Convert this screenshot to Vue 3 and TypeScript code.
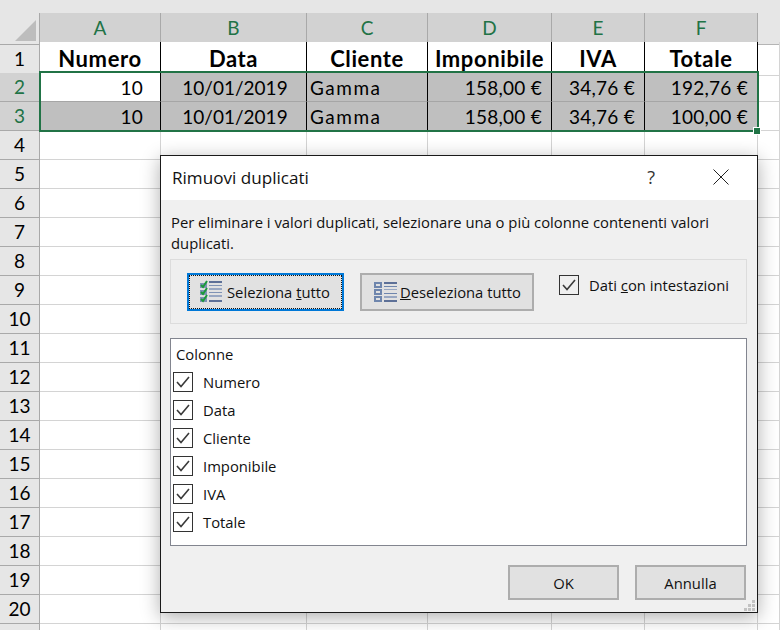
<script setup lang="ts">
const cols = ['A', 'B', 'C', 'D', 'E', 'F']
const head = ['Numero', 'Data', 'Cliente', 'Imponibile', 'IVA', 'Totale']
const dataRows = [
  ['10', '10/01/2019', 'Gamma', '158,00 €', '34,76 €', '192,76 €'],
  ['10', '10/01/2019', 'Gamma', '158,00 €', '34,76 €', '100,00 €'],
]
const aligns = ['right first', 'center', 'left', 'right', 'right', 'right']
const emptyRows = Array.from({ length: 17 }, (_, i) => i + 4)
const items = ['Numero', 'Data', 'Cliente', 'Imponibile', 'IVA', 'Totale']
const gripDots = [[8, 0], [4, 4], [8, 4], [0, 8], [4, 8], [8, 8]]
</script>

<template>
  <div class="sheet">
    <div class="band"></div>
    <div class="row head-row">
      <div class="corner"><span class="tri"></span></div>
      <div v-for="c in cols" :key="c" class="col-h">{{ c }}</div>
      <div class="filler-h"></div>
    </div>
    <div class="row first-row">
      <div class="row-h">1</div>
      <div v-for="h in head" :key="h" class="cell bold">{{ h }}</div>
      <div class="blank"></div>
    </div>
    <div v-for="(r, ri) in dataRows" :key="ri" class="row">
      <div class="row-h sel">{{ ri + 2 }}</div>
      <div
        v-for="(v, ci) in r"
        :key="ci"
        class="cell filled"
        :class="[aligns[ci], { white: ri === 0 && ci === 0 }]"
      >{{ v }}</div>
      <div class="blank"></div>
    </div>
    <div v-for="n in emptyRows" :key="n" class="row">
      <div class="row-h">{{ n }}</div>
      <div v-for="c in cols" :key="c" class="blank"></div>
      <div class="blank"></div>
    </div>
    <div class="row">
      <div class="row-h"></div>
      <div v-for="c in cols" :key="c" class="blank"></div>
      <div class="blank"></div>
    </div>

    <div class="selection"><span class="handle"></span></div>

    <div class="dialog">
      <div class="title">
        <span class="title-text">Rimuovi duplicati</span>
        <span class="help">?</span>
        <svg class="close" width="16" height="16" viewBox="0 0 16 16">
          <path d="M.5.5l15 15M15.5.5l-15 15" stroke="#222" stroke-width="1" fill="none" />
        </svg>
      </div>
      <div class="body">
        <p class="desc">Per eliminare i valori duplicati, selezionare una o più colonne contenenti valori duplicati.</p>
        <div class="panel">
          <button class="btn focus">
            <span class="focus-ring">
              <svg width="24" height="24" viewBox="0 0 24 24">
                <g fill="#7f93b5">
                  <rect x="1" y="3" width="7" height="5" />
                  <rect x="1" y="10" width="7" height="5" />
                  <rect x="1" y="17" width="7" height="5" />
                  <rect x="10" y="1" width="13" height="2" fill="#5d7097" />
                  <rect x="10" y="5" width="13" height="1" />
                  <rect x="10" y="8" width="13" height="2" fill="#98a7c2" />
                  <rect x="10" y="12" width="13" height="1" />
                  <rect x="10" y="15" width="13" height="2" fill="#98a7c2" />
                  <rect x="10" y="20" width="13" height="2" fill="#5d7097" />
                </g>
                <g fill="none" stroke="#1b9a3a" stroke-width="2">
                  <path d="M2 5l2 2 4-6" />
                  <path d="M2 12l2 2 4-6" />
                  <path d="M2 19l2 2 4-6" />
                </g>
              </svg>
              <span>Seleziona <u>t</u>utto</span>
            </span>
          </button>
          <button class="btn second">
            <svg width="24" height="24" viewBox="0 0 24 24">
              <g fill="#6f86ad">
                <path fill-rule="evenodd" d="M1 2h8v6H1zM3 4v2h4V4z" />
                <path fill-rule="evenodd" d="M1 9h8v6H1zM3 11v2h4v-2z" />
                <path fill-rule="evenodd" d="M1 16h8v6H1zM3 18v2h4v-2z" />
                <rect x="11" y="2" width="13" height="2" fill="#5d7097" />
                <rect x="11" y="6" width="13" height="1" />
                <rect x="11" y="9" width="13" height="1" fill="#98a7c2" />
                <rect x="11" y="13" width="13" height="1" />
                <rect x="11" y="16" width="13" height="2" fill="#98a7c2" />
                <rect x="11" y="20" width="13" height="2" fill="#5d7097" />
              </g>
            </svg>
            <span><u>D</u>eseleziona tutto</span>
          </button>
          <label class="hdr-check">
            <span class="box">
              <svg width="14" height="12" viewBox="0 0 14 12"><path d="M1 6l4 4.500L13 1" fill="none" stroke="#3a3a3a" stroke-width="1.600" /></svg>
            </span>
            <span>Dati <u>c</u>on intestazioni</span>
          </label>
        </div>
        <div class="list">
          <div class="list-head">Colonne</div>
          <div v-for="it in items" :key="it" class="list-item">
            <span class="box">
              <svg width="14" height="12" viewBox="0 0 14 12"><path d="M1 6l4 4.500L13 1" fill="none" stroke="#3a3a3a" stroke-width="1.600" /></svg>
            </span>
            <span>{{ it }}</span>
          </div>
        </div>
        <div class="actions">
          <button class="btn plain">OK</button>
          <button class="btn plain">Annulla</button>
        </div>
      </div>
      <svg class="grip" width="11" height="11" viewBox="0 0 11 11">
        <rect v-for="(d, i) in gripDots" :key="i" :x="d[0]" :y="d[1]" width="3" height="3" fill="#c2c2c2" />
      </svg>
    </div>
  </div>
</template>

<style>
html, body { margin: 0; background: #fff; overflow: hidden; }
</style>

<style scoped>
.sheet {
  position: relative;
  width: 780px;
  height: 630px;
  overflow: hidden;
  background: #fff;
  font-family: "Lato", "Liberation Sans", sans-serif;
  color: #000;
}
.band { height: 13px; background: #e6e6e6; }
.row {
  display: grid;
  grid-template-columns: 40px 121px 146px 121px 124px 93px 113px 22px;
  height: 29px;
}
.head-row { height: 29px; }
.first-row { height: 31px; }
.corner {
  position: relative;
  background: #e6e6e6;
  border-right: 1px solid #a9a9a9;
  border-bottom: 1px solid #a9a9a9;
  box-sizing: border-box;
}
.tri {
  position: absolute;
  right: 3px;
  bottom: 3px;
  width: 0;
  height: 0;
  border-left: 21px solid transparent;
  border-bottom: 21px solid #bdbdbd;
}
.col-h {
  box-sizing: border-box;
  background: #d2d2d2;
  border-right: 1px solid #a9a9a9;
  border-bottom: 2px solid #217346;
  color: #217346;
  text-align: center;
  font-size: 19px;
  line-height: 30px;
}
.filler-h {
  background: #e6e6e6;
  border-bottom: 1px solid #b5b5b5;
  box-sizing: border-box;
}
.row-h {
  box-sizing: border-box;
  background: #e6e6e6;
  border-right: 1px solid #a9a9a9;
  border-bottom: 1px solid #a9a9a9;
  text-align: center;
  font-size: 19px;
  line-height: 28px;
}
.row-h.sel { background: #d2d2d2; color: #217346; }
.first-row .row-h { line-height: 33px; }
.blank {
  box-sizing: border-box;
  border-right: 1px solid #d4d4d4;
  border-bottom: 1px solid #d4d4d4;
}
.cell {
  box-sizing: border-box;
  border-right: 1px solid #000;
  font-size: 19px;
  white-space: nowrap;
  overflow: hidden;
}
.cell.bold {
  font-weight: 700;
  text-align: center;
  line-height: 33px;
  background: #fff;
  font-size: 22px;
  letter-spacing: 0.6px;
}
.cell.filled {
  background: #bfbfbf;
  border-bottom: 1px solid #a6a6a6;
  line-height: 29px;
  padding: 0 9px 0 3px;
}
.cell.white { background: #fff; }
.cell.filled.right { text-align: right; letter-spacing: 0.25px; }
.cell.filled.first { padding-right: 17px; }
.cell.filled.center { text-align: center; padding: 0 3px 0 6px; }
.cell.filled.left { text-align: left; letter-spacing: 1.5px; }
.selection {
  position: absolute;
  left: 39px;
  top: 71px;
  width: 720px;
  height: 61px;
  box-sizing: border-box;
  border: 2px solid #217346;
}
.handle {
  position: absolute;
  right: -3px;
  bottom: -4px;
  width: 6px;
  height: 6px;
  background: #217346;
  outline: 1px solid #fff;
}
.dialog {
  position: absolute;
  left: 160px;
  top: 155px;
  width: 598px;
  height: 458px;
  box-sizing: border-box;
  border: 1px solid #1a1a1a;
  background: #f0f0f0;
  box-shadow: 0 4px 18px rgba(0, 0, 0, 0.32);
  font-family: "Open Sans", "Noto Sans", sans-serif;
  font-size: 14.8px;
  color: #111;
  display: flex;
  flex-direction: column;
}
.title {
  height: 44px;
  background: #fff;
  display: flex;
  align-items: center;
  padding-left: 11px;
  flex: none;
}
.title-text { font-size: 17.1px; flex: 1; margin-top: -1px; }
.help { font-size: 18px; color: #333; margin-right: 58px; margin-top: -3px; }
.close { margin-right: 28px; margin-top: -2px; }
.body {
  flex: 1;
  display: flex;
  flex-direction: column;
  padding: 0 10px 0 9px;
  min-height: 0;
}
.desc {
  margin: 12px 10px 0 1px;
  line-height: 21px;
  height: 47px;
}
.panel {
  box-sizing: border-box;
  height: 65px;
  background: #efefef;
  border: 1px solid #dcdcdc;
  display: flex;
  align-items: flex-start;
  padding: 13px 0 0 16px;
  flex: none;
}
.btn {
  box-sizing: border-box;
  background: #e1e1e1;
  border: 2px solid #adadad;
  font: inherit;
  color: #111;
  padding: 0;
  display: flex;
  align-items: center;
  justify-content: center;
}
.focus {
  width: 157px;
  height: 38px;
  border-color: #0078d7;
}
.focus-ring {
  box-sizing: border-box;
  width: 100%;
  height: 100%;
  border: 1px dotted #111;
  display: flex;
  align-items: center;
  padding-left: 9px;
  gap: 4px;
}
.second {
  width: 174px;
  height: 38px;
  margin-left: 16px;
  justify-content: flex-start;
  padding-left: 11px;
  gap: 3px;
  white-space: nowrap;
}
.hdr-check {
  display: flex;
  align-items: center;
  gap: 10px;
  margin: 2px 0 0 25px;
  height: 20px;
  white-space: nowrap;
}
.box {
  box-sizing: border-box;
  width: 20px;
  height: 20px;
  border: 1px solid #333;
  background: #fff;
  display: inline-flex;
  align-items: center;
  justify-content: center;
  flex: none;
}
.hdr-check .box { background: transparent; }
.list {
  box-sizing: border-box;
  margin-top: 14px;
  height: 208px;
  background: #fff;
  border: 1px solid #82858f;
  flex: none;
}
.list-head { height: 29px; padding-left: 5px; line-height: 30px; }
.list-item {
  height: 28px;
  padding-left: 2px;
  display: flex;
  align-items: center;
  gap: 10px;
}
.actions {
  display: flex;
  justify-content: flex-end;
  gap: 16px;
  margin-top: 19px;
  padding-right: 1px;
}
.plain {
  width: 111px;
  height: 35px;
}
.grip {
  position: absolute;
  right: 2px;
  bottom: 1px;
}
</style>
